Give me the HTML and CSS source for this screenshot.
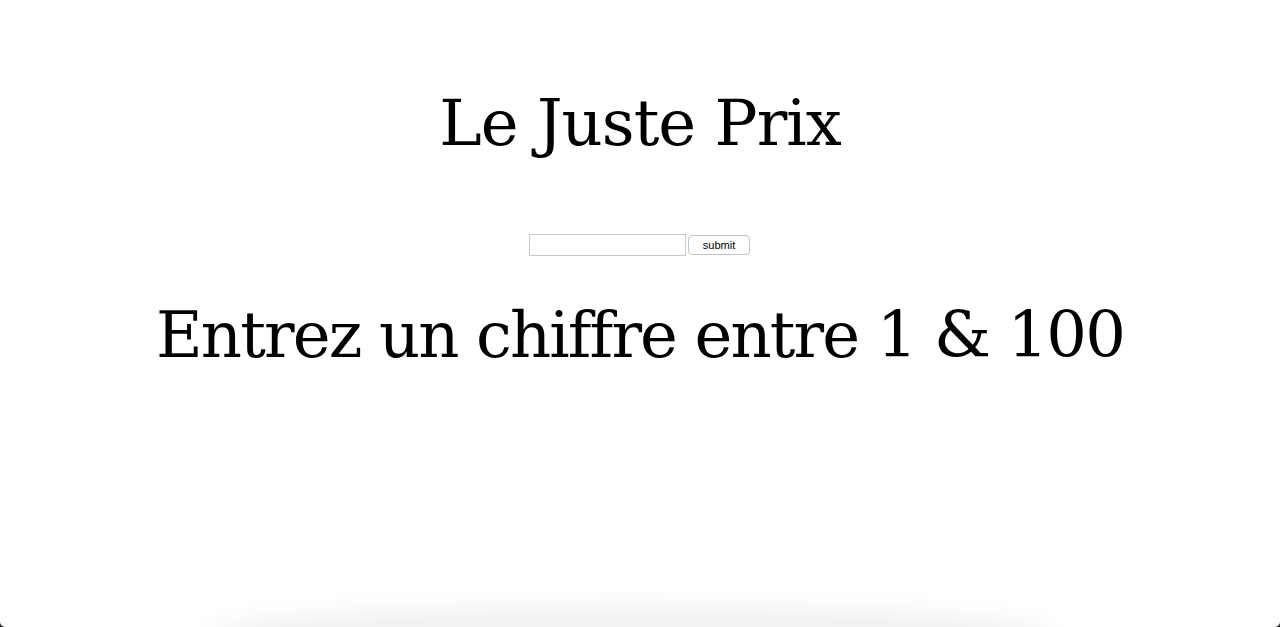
FILE: index.html
```html
<!DOCTYPE html>
<html lang="fr">
<head>
<meta charset="utf-8">
<title>Le Juste Prix</title>
<link rel="stylesheet" href="styles.css">
</head>
<body>
<main class="page">
  <h1 class="title">Le Juste Prix</h1>
  <form class="guess-form" onsubmit="return false;">
    <input class="guess-input" type="text">
    <button class="guess-button" type="submit">submit</button>
  </form>
  <p class="message">Entrez un chiffre entre 1 &amp; 100</p>
</main>
<div class="shadow"></div>
</body>
</html>
```
FILE: styles.css
```css
html {
  margin: 0;
  padding: 0;
  height: 100%;
  background: #1a1a1a;
  overflow: hidden;
}
body {
  margin: 0;
  padding: 0;
  height: 100%;
  background: #ffffff;
  border-radius: 0 0 5px 5px;
  overflow: hidden;
  position: relative;
  font-family: "DejaVu Serif", "Liberation Serif", serif;
  color: #000;
}
.page {
  display: flex;
  flex-direction: column;
  align-items: center;
}
.title {
  margin: 86px 0 0;
  font-size: 64px;
  font-weight: normal;
  line-height: 74px;
  letter-spacing: -1px;
}
.guess-form {
  margin-top: 74px;
  margin-right: 1px;
  display: flex;
  align-items: center;
  gap: 2px;
  height: 22px;
}
.guess-input {
  box-sizing: border-box;
  width: 157px;
  height: 22px;
  border: 1px solid #c8c8c8;
  padding: 0 3px;
  margin: 0;
  background: #fff;
  font-family: "Liberation Sans", sans-serif;
  font-size: 12px;
}
.guess-button {
  box-sizing: border-box;
  width: 62px;
  height: 20px;
  margin: 0;
  padding: 0 0 1px;
  border: 1px solid #c4c4c4;
  border-radius: 4px;
  background: #fff;
  font-family: "Liberation Sans", sans-serif;
  font-size: 11px;
  color: #000;
}
.message {
  margin: 42px 0 0;
  font-size: 64px;
  line-height: 74px;
  letter-spacing: -1.9px;
}
.shadow {
  position: absolute;
  left: 215px;
  right: 235px;
  bottom: -30px;
  height: 40px;
  border-radius: 50%;
  box-shadow: 0 0 28px 8px rgba(0,0,0,0.07);
  background: rgba(0,0,0,0.05);
}
```
